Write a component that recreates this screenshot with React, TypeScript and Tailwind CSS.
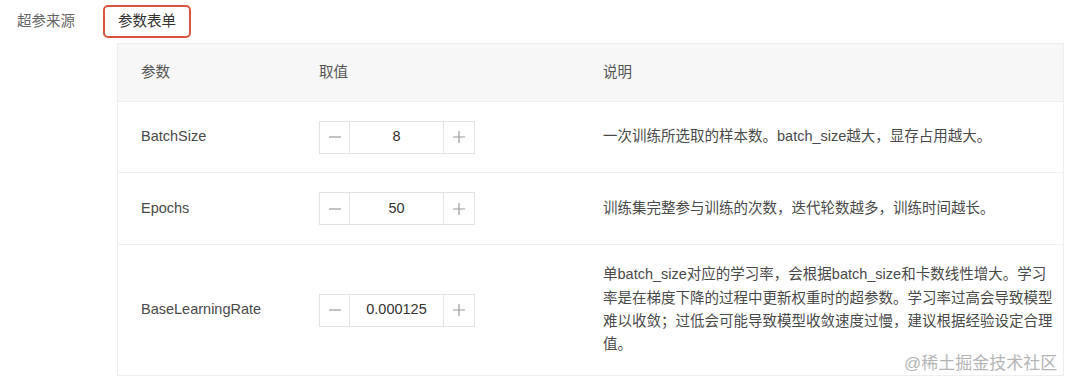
import React from "react";

type Row = { name: string; value: string; desc: string; h: string };

const rows: Row[] = [
  {
    name: "BatchSize",
    value: "8",
    desc: "一次训练所选取的样本数。batch_size越大，显存占用越大。",
    h: "h-[70px]",
  },
  {
    name: "Epochs",
    value: "50",
    desc: "训练集完整参与训练的次数，迭代轮数越多，训练时间越长。",
    h: "h-[72px]",
  },
  {
    name: "BaseLearningRate",
    value: "0.000125",
    desc: "单batch_size对应的学习率，会根据batch_size和卡数线性增大。学习率是在梯度下降的过程中更新权重时的超参数。学习率过高会导致模型难以收敛；过低会可能导致模型收敛速度过慢，建议根据经验设定合理值。",
    h: "h-[131px]",
  },
];

function Stepper({ value }: { value: string }) {
  return (
    <div className="flex h-[33px] w-[156px] border border-[#e3e3e3] bg-white">
      <button className="flex w-[30px] items-center justify-center border-r border-[#e3e3e3]">
        <svg width="14" height="14" viewBox="0 0 14 14">
          <path d="M1 7h12" stroke="#9a9a9a" strokeWidth="1.2" />
        </svg>
      </button>
      <div className="flex flex-1 items-center justify-center text-[14.5px] text-[#333]">{value}</div>
      <button className="flex w-[31px] items-center justify-center border-l border-[#e3e3e3]">
        <svg width="14" height="14" viewBox="0 0 14 14">
          <path d="M1 7h12M7 1v12" stroke="#9a9a9a" strokeWidth="1.2" />
        </svg>
      </button>
    </div>
  );
}

export default function App() {
  return (
    <div
      className="relative h-[388px] w-[1080px] overflow-hidden bg-white"
      style={{ fontFamily: '"Liberation Sans", "Noto Sans CJK SC", sans-serif' }}
    >
      {/* Tabs */}
      <div className="flex h-[43px] items-start pt-[5px]">
        <div className="ml-[17px] flex h-[33px] items-center text-[14.5px] text-[#666]">超参来源</div>
        <div className="ml-[28px] flex h-[33px] w-[88px] items-center rounded-[5px] border-2 border-[#d9553f] pl-[13px] text-[14.5px] text-[#333]">
          参数表单
        </div>
      </div>

      {/* Table */}
      <div className="ml-[117px] w-[947px] border-x border-b border-[#eeeeee] text-[14.5px]">
        <div className="flex h-[59px] items-center border-y border-[#eeeeee] bg-[#f7f7f7] text-[#555]">
          <div className="w-[178px] pl-[23px]">参数</div>
          <div className="w-[307px] pl-[23px]">取值</div>
          <div className="flex-1">说明</div>
        </div>
        {rows.map((r, i) => (
          <div
            key={r.name}
            className={`flex items-center ${r.h} ${i > 0 ? "border-t border-[#eeeeee]" : ""}`}
          >
            <div className="w-[178px] pl-[23px] text-[#4a4a4a]">{r.name}</div>
            <div className="w-[307px] pl-[23px]">
              <Stepper value={r.value} />
            </div>
            <div className="flex-1 pr-[8px] leading-[23.3px] text-[#4a4a4a]">{r.desc}</div>
          </div>
        ))}
      </div>

      {/* watermark */}
      <div className="absolute left-[904px] top-[352px] text-[17px] leading-[24px] text-[#b5b5b5]">
        @稀土掘金技术社区
      </div>
    </div>
  );
}
